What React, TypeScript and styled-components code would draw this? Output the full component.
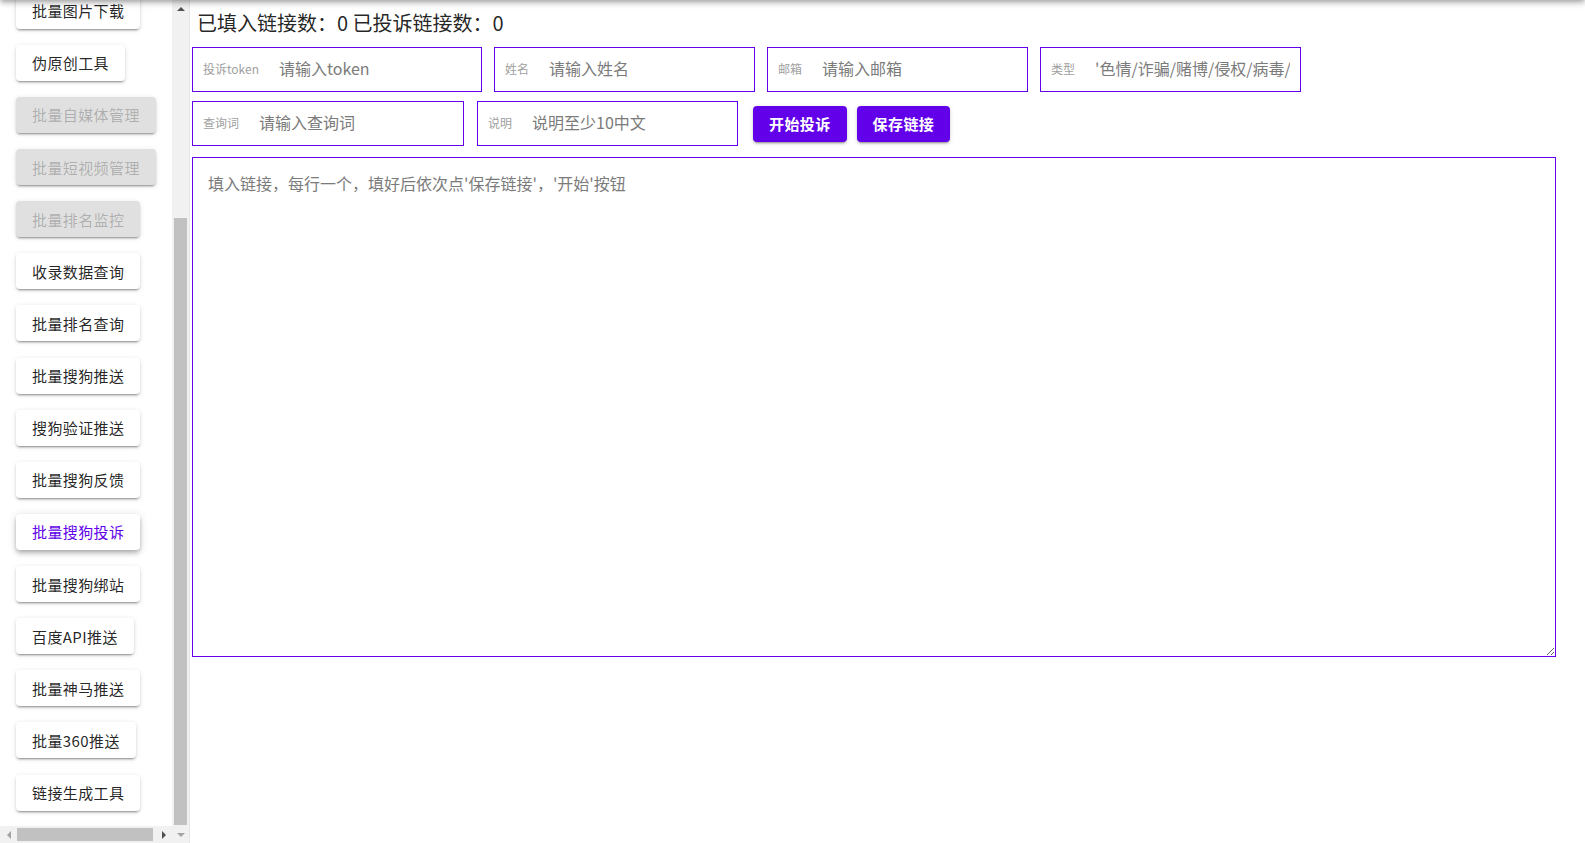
import React, { useLayoutEffect, useRef } from 'react';
import styled, { createGlobalStyle, css } from 'styled-components';

const PURPLE = '#6200ea';
const FONT = `"Noto Sans CJK SC", "Noto Sans", Roboto, sans-serif`;
const TRACK = '#f1f1f1';
const THUMB = '#c1c1c1';
const DARK = '#505050';
const LIGHT = '#a3a3a3';

const ELEV2 =
  '0px 3px 1px -2px rgba(0,0,0,0.2), 0px 2px 2px 0px rgba(0,0,0,0.14), 0px 1px 5px 0px rgba(0,0,0,0.12)';
const ELEV4 =
  '0px 2px 4px -1px rgba(0,0,0,0.2), 0px 4px 5px 0px rgba(0,0,0,0.14), 0px 1px 10px 0px rgba(0,0,0,0.12)';

type Dir = 'up' | 'down' | 'left' | 'right';

const Global = createGlobalStyle`
  html, body {
    margin: 0;
    padding: 0;
    height: 100%;
    overflow: hidden;
    background: #fff;
  }
  body {
    font-family: ${FONT};
    color: rgba(0, 0, 0, 0.87);
  }
  #root {
    height: 100%;
  }
  *, *::before, *::after {
    box-sizing: border-box;
  }
`;

const Shell = styled.div`
  display: flex;
  height: 100vh;
`;

const TopShadow = styled.div`
  position: fixed;
  left: 0;
  right: 0;
  top: -64px;
  height: 64px;
  z-index: 10;
  background: #fff;
  box-shadow: ${ELEV4};
`;

/* ---------- sidebar ---------- */

const Sidebar = styled.aside`
  flex: none;
  width: 190px;
  height: 100%;
  display: flex;
  border-right: 1px solid #e6e6e6;
`;

const SidePane = styled.div`
  flex: 1;
  min-width: 0;
  display: flex;
  flex-direction: column;
`;

const NavWindow = styled.div`
  flex: 1;
  min-height: 0;
  overflow-x: hidden;
  overflow-y: auto;
  scrollbar-width: none;
  &::-webkit-scrollbar {
    display: none;
  }
`;

const NavColumn = styled.nav`
  display: flex;
  flex-direction: column;
  align-items: flex-start;
  gap: 16.14px;
  padding: 16px 0 15px 16px;
`;

const NavButton = styled.button<{ $active?: boolean }>`
  flex: none;
  height: 36px;
  padding: 0 16px;
  border: 0;
  border-radius: 4px;
  background: #fff;
  font-family: ${FONT};
  font-size: 15px;
  font-weight: 400;
  letter-spacing: 0.4px;
  color: rgba(0, 0, 0, 0.87);
  white-space: nowrap;
  box-shadow: ${ELEV2};
  cursor: pointer;

  ${(p) =>
    p.$active &&
    css`
      color: ${PURPLE};
      box-shadow: ${ELEV4};
    `}

  &:disabled {
    background: #e0e0e0;
    color: rgba(0, 0, 0, 0.24);
    cursor: default;
  }
`;

/* ---------- drawn scrollbars ---------- */

const ScrollbarV = styled.div`
  flex: none;
  width: 17px;
  display: flex;
  flex-direction: column;
  background: ${TRACK};
`;

const ScrollbarH = styled.div`
  flex: none;
  height: 17px;
  display: flex;
  background: ${TRACK};
`;

const triangle = (dir: Dir, c: string) => {
  switch (dir) {
    case 'up':
      return `border-width: 0 4px 4px 4px; border-color: transparent transparent ${c} transparent;`;
    case 'down':
      return `border-width: 4px 4px 0 4px; border-color: ${c} transparent transparent transparent;`;
    case 'left':
      return `border-width: 4px 4px 4px 0; border-color: transparent ${c} transparent transparent;`;
    default:
      return `border-width: 4px 0 4px 4px; border-color: transparent transparent transparent ${c};`;
  }
};

const ScrollArrow = styled.span<{ $dir: Dir; $dim?: boolean }>`
  flex: none;
  width: 17px;
  height: 17px;
  display: flex;
  align-items: center;
  justify-content: center;
  &::before {
    content: '';
    width: 0;
    height: 0;
    border-style: solid;
    ${(p) => triangle(p.$dir, p.$dim ? LIGHT : DARK)}
  }
`;

const TrackV = styled.div`
  flex: 1;
  display: flex;
  flex-direction: column;
  padding: 0 2px;
`;

const TrackH = styled.div`
  flex: 1;
  display: flex;
  padding: 2px 0;
`;

const ThumbV = styled.div<{ $offset: number; $size: number }>`
  flex: none;
  margin-top: ${(p) => p.$offset}px;
  height: ${(p) => p.$size}px;
  background: ${THUMB};
`;

const ThumbH = styled.div<{ $offset: number; $size: number }>`
  flex: none;
  margin-left: ${(p) => p.$offset}px;
  width: ${(p) => p.$size}px;
  background: ${THUMB};
`;

/* ---------- main ---------- */

const Main = styled.main`
  flex: 1;
  min-width: 0;
  padding: 8px 0 0 2px;
  display: flex;
  flex-direction: column;
`;

const Title = styled.h1`
  margin: 0;
  padding-left: 5px;
  font-size: 20px;
  font-weight: 400;
  line-height: 30px;
  color: rgba(0, 0, 0, 0.87);
`;

const FieldRow = styled.div<{ $gap: number; $top: number }>`
  display: flex;
  align-items: center;
  gap: ${(p) => p.$gap}px;
  margin-top: ${(p) => p.$top}px;
`;

const Field = styled.label<{ $w: number }>`
  flex: none;
  display: flex;
  align-items: center;
  width: ${(p) => p.$w}px;
  height: 45px;
  padding: 0 10px;
  border: 1px solid ${PURPLE};
  background: #fff;
`;

const FieldLabel = styled.span`
  flex: none;
  margin: 0 20px 2px 0;
  font-size: 12px;
  color: #a0a0a0;
  white-space: nowrap;
`;

const FieldInput = styled.input`
  flex: 1;
  min-width: 0;
  height: 30px;
  padding: 0 0 4px;
  border: 0;
  outline: none;
  background: transparent;
  font-family: ${FONT};
  font-size: 16px;
  color: rgba(0, 0, 0, 0.87);
  &::placeholder {
    color: #7b7b7b;
    opacity: 1;
  }
`;

const ButtonGroup = styled.div`
  display: flex;
  gap: 10px;
  margin-left: 2px;
`;

const ActionButton = styled.button`
  height: 36px;
  padding: 0 16px;
  border: 0;
  border-radius: 4px;
  background: ${PURPLE};
  color: #fff;
  font-family: ${FONT};
  font-size: 15px;
  font-weight: 700;
  letter-spacing: 0.4px;
  white-space: nowrap;
  box-shadow: ${ELEV2};
  cursor: pointer;
`;

const LinksArea = styled.textarea`
  margin-top: 11px;
  width: 1364px;
  height: 500px;
  padding: 15px 15px;
  border: 1px solid ${PURPLE};
  outline: none;
  resize: both;
  font-family: ${FONT};
  font-size: 16px;
  line-height: 20px;
  color: rgba(0, 0, 0, 0.87);
  &::placeholder {
    color: #7b7b7b;
    opacity: 1;
  }
`;

type NavItem = { label: string; disabled?: boolean; active?: boolean };

const NAV: NavItem[] = [
  { label: '批量标题生成' },
  { label: '批量文章采集' },
  { label: '批量关键词挖掘' },
  { label: '批量域名查询' },
  { label: '批量网站收录' },
  { label: '批量图片下载' },
  { label: '伪原创工具' },
  { label: '批量自媒体管理', disabled: true },
  { label: '批量短视频管理', disabled: true },
  { label: '批量排名监控', disabled: true },
  { label: '收录数据查询' },
  { label: '批量排名查询' },
  { label: '批量搜狗推送' },
  { label: '搜狗验证推送' },
  { label: '批量搜狗反馈' },
  { label: '批量搜狗投诉', active: true },
  { label: '批量搜狗绑站' },
  { label: '百度API推送' },
  { label: '批量神马推送' },
  { label: '批量360推送' },
  { label: '链接生成工具' },
];

export default function App() {
  const navRef = useRef<HTMLDivElement>(null);

  useLayoutEffect(() => {
    const el = navRef.current;
    if (el) el.scrollTop = el.scrollHeight;
  }, []);

  return (
    <>
      <Global />
      <TopShadow />
      <Shell>
        <Sidebar>
          <SidePane>
            <NavWindow ref={navRef}>
              <NavColumn>
                {NAV.map((n) => (
                  <NavButton key={n.label} disabled={n.disabled} $active={n.active}>
                    {n.label}
                  </NavButton>
                ))}
              </NavColumn>
            </NavWindow>
            <ScrollbarH>
              <ScrollArrow $dir="left" $dim />
              <TrackH>
                <ThumbH $offset={0} $size={136} />
              </TrackH>
              <ScrollArrow $dir="right" />
            </ScrollbarH>
          </SidePane>
          <ScrollbarV>
            <ScrollArrow $dir="up" />
            <TrackV>
              <ThumbV $offset={201} $size={607} />
            </TrackV>
            <ScrollArrow $dir="down" $dim />
          </ScrollbarV>
        </Sidebar>
        <Main>
          <Title>已填入链接数：0 已投诉链接数：0</Title>
          <FieldRow $gap={12} $top={9}>
            <Field $w={290}>
              <FieldLabel>投诉token</FieldLabel>
              <FieldInput placeholder="请输入token" />
            </Field>
            <Field $w={261}>
              <FieldLabel>姓名</FieldLabel>
              <FieldInput placeholder="请输入姓名" />
            </Field>
            <Field $w={261}>
              <FieldLabel>邮箱</FieldLabel>
              <FieldInput placeholder="请输入邮箱" />
            </Field>
            <Field $w={261}>
              <FieldLabel>类型</FieldLabel>
              <FieldInput placeholder="'色情/诈骗/赌博/侵权/病毒/垃圾/其他'" />
            </Field>
          </FieldRow>
          <FieldRow $gap={13} $top={9}>
            <Field $w={272}>
              <FieldLabel>查询词</FieldLabel>
              <FieldInput placeholder="请输入查询词" />
            </Field>
            <Field $w={261}>
              <FieldLabel>说明</FieldLabel>
              <FieldInput placeholder="说明至少10中文" />
            </Field>
            <ButtonGroup>
              <ActionButton>开始投诉</ActionButton>
              <ActionButton>保存链接</ActionButton>
            </ButtonGroup>
          </FieldRow>
          <LinksArea placeholder="填入链接，每行一个，填好后依次点'保存链接'，'开始'按钮" />
        </Main>
      </Shell>
    </>
  );
}
